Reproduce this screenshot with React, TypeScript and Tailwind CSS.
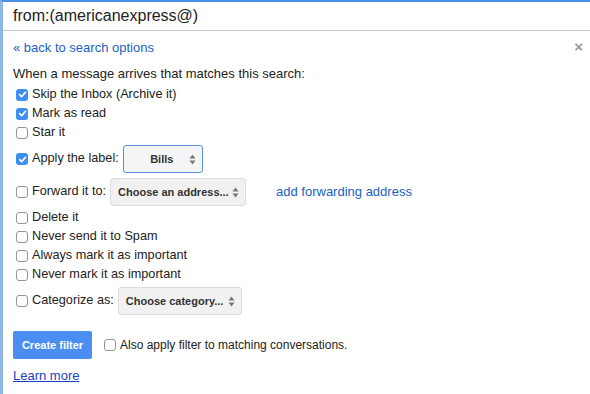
import React from 'react';

function Box({ checked = false }: { checked?: boolean }) {
  if (checked) {
    return (
      <span className="inline-flex h-[12px] w-[12px] shrink-0 items-center justify-center rounded-[3px] bg-[#3d8ef0]">
        <svg width="9" height="9" viewBox="0 0 10 10">
          <path d="M1.8 5.2 L4 7.4 L8.3 2.6" fill="none" stroke="#fff" strokeWidth="1.8" strokeLinecap="round" strokeLinejoin="round" />
        </svg>
      </span>
    );
  }
  return <span className="inline-block h-[12px] w-[12px] shrink-0 rounded-[3px] border border-[#959595] bg-white" />;
}

function Arrows() {
  return (
    <svg width="7" height="11" viewBox="0 0 7 11" className="shrink-0">
      <path d="M3.5 0.5 L6.5 4.5 L0.5 4.5 Z" fill="#777" />
      <path d="M3.5 10.5 L6.5 6.5 L0.5 6.5 Z" fill="#777" />
    </svg>
  );
}

function Select({ label, w, focused = false, center = false }: { label: string; w: string; focused?: boolean; center?: boolean }) {
  return (
    <div
      className={`flex h-[28px] items-center rounded-[3px] border pl-[7px] pr-[6px] ${w} ${
        focused ? 'border-[#5b8fd9] bg-[#f4f5f7]' : 'border-[#dcdcdc] bg-[#f1f1f1]'
      }`}
    >
      <span className={`flex-1 text-[11px] font-bold text-[#333] ${center ? 'text-center pl-[4px]' : ''}`}>{label}</span>
      <Arrows />
    </div>
  );
}

function Row({ checked, children }: { checked?: boolean; children: React.ReactNode }) {
  return (
    <div className="flex h-[19px] items-center gap-[4px] pl-[3px]">
      <Box checked={checked} />
      <span>{children}</span>
    </div>
  );
}

export default function App() {
  return (
    <div
      className="h-[394px] w-[590px] overflow-hidden border-l-[3px] border-t-2 border-l-[#8db6e4] border-t-[#4a8ee6] bg-white text-[13px] text-[#222]"
      style={{ fontFamily: '"Liberation Sans", Arial, sans-serif' }}
    >
      <div className="flex h-[29px] items-center border-b border-[#c8c8c8] pl-[10px] text-[16px] text-[#222]">
        from:(americanexpress@)
      </div>

      <div className="relative px-[10px] pt-[7px]">
        <button className="absolute right-[7px] top-[8px] text-[15px] font-bold leading-none text-[#999]">×</button>
        <div className="h-[19px] leading-[19px] text-[#1a5fc4]">« back to search options</div>

        <div className="mt-[7px] h-[19px] leading-[19px]">When a message arrives that matches this search:</div>

        <div className="mt-[2px] text-[12.7px]">
          <Row checked>Skip the Inbox (Archive it)</Row>
          <Row checked>Mark as read</Row>
          <Row>Star it</Row>
          <div className="mt-[3px] flex h-[28px] items-center gap-[4px] pl-[3px]">
            <Box checked />
            <span>Apply the label:</span>
            <Select label="Bills" w="w-[80px]" focused center />
          </div>
          <div className="mt-[5px] flex h-[28px] items-center gap-[4px] pl-[3px]">
            <Box />
            <span>Forward it to:</span>
            <Select label="Choose an address..." w="w-[136px]" />
            <span className="ml-[26px] text-[13px] text-[#1a5fc4]">add forwarding address</span>
          </div>
          <div className="mt-[2px]">
            <Row>Delete it</Row>
            <Row>Never send it to Spam</Row>
            <Row>Always mark it as important</Row>
            <Row>Never mark it as important</Row>
          </div>
          <div className="mt-[3px] flex h-[28px] items-center gap-[4px] pl-[3px]">
            <Box />
            <span>Categorize as:</span>
            <Select label="Choose category..." w="w-[124px]" />
          </div>
        </div>

        <div className="mt-[16px] flex items-center">
          <button className="h-[28px] w-[79px] rounded-[2px] bg-[#4a8ef2] text-[11px] font-bold text-white">Create filter</button>
          <span className="ml-[12px] flex items-center gap-[4px] text-[12px]">
            <Box />
            <span>Also apply filter to matching conversations.</span>
          </span>
        </div>

        <div className="mt-[7px] text-[#1a3fc4] underline">Learn more</div>
      </div>
    </div>
  );
}
